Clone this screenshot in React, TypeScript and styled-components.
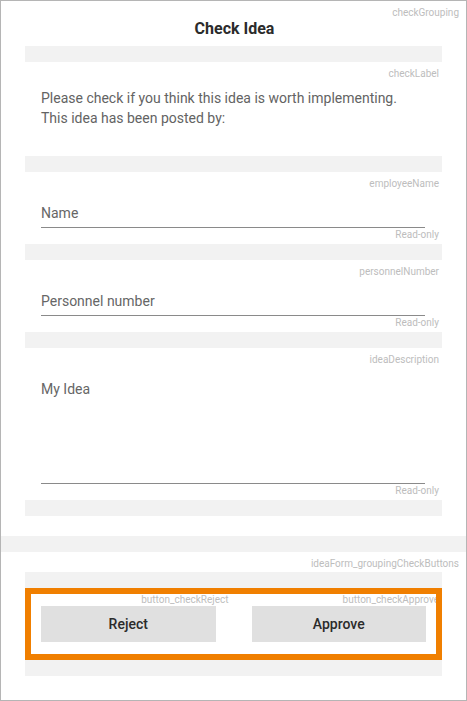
import styled, { createGlobalStyle } from 'styled-components';

const GlobalStyle = createGlobalStyle`
  html, body {
    margin: 0;
    padding: 0;
    background: #ffffff;
  }
  body {
    font-family: Roboto, "Liberation Sans", sans-serif;
  }
`;

const Frame = styled.div`
  box-sizing: border-box;
  width: 467px;
  height: 701px;
  border: 1px solid #b5b5b5;
  display: flex;
  flex-direction: column;
  background: #ffffff;
`;

const HintLabel = styled.div<{ $offset?: number }>`
  font-size: 10px;
  line-height: 12px;
  height: 12px;
  color: #bdbdbd;
  text-align: right;
  white-space: nowrap;
  margin-right: ${(p) => p.$offset ?? 0}px;
`;

const TitleArea = styled.div`
  height: 45px;
  padding-top: 6px;
  box-sizing: border-box;
`;

const Title = styled.h1`
  margin: 0;
  font-size: 16px;
  line-height: 20px;
  font-weight: 700;
  color: #2b2b2b;
  text-align: center;
  padding-left: 2px;
`;

const Group = styled.div`
  padding: 0 24px;
  display: flex;
  flex-direction: column;
`;

const Spacer = styled.div`
  height: 16px;
  background: #f2f2f2;
  flex-shrink: 0;
`;

const Section = styled.div<{ $height: number }>`
  height: ${(p) => p.$height}px;
  box-sizing: border-box;
  padding: 6px 3px 0 16px;
  display: flex;
  flex-direction: column;
`;

const Paragraph = styled.p`
  margin: 8px 0 0 0;
  font-size: 14px;
  line-height: 20px;
  color: #636363;
`;

const InputBox = styled.div<{ $height: number }>`
  box-sizing: border-box;
  height: ${(p) => p.$height}px;
  margin-right: 14px;
  padding-top: 13px;
  border-bottom: 1px solid #8a8a8a;
  font-size: 14px;
  line-height: 20px;
  color: #666666;
`;

const ReadOnly = styled(HintLabel)`
  margin-top: 1px;
`;

const Gap = styled.div`
  height: 20px;
  flex-shrink: 0;
`;

const ButtonsHeader = styled.div`
  height: 20px;
  box-sizing: border-box;
  padding-top: 6px;
`;

const ButtonsTray = styled.div`
  margin: 0 24px;
  padding: 16px 0;
  background: #f2f2f2;
`;

const HighlightBox = styled.div`
  border: 6px solid #f07f00;
  background: #ffffff;
  height: 72px;
  box-sizing: border-box;
  display: flex;
  overflow: hidden;
`;

const ButtonCell = styled.div`
  flex: 1;
  display: flex;
  flex-direction: column;
  min-width: 0;
`;

const ActionButton = styled.button`
  height: 36px;
  border: none;
  background: #e0e0e0;
  font-family: Roboto, "Liberation Sans", sans-serif;
  font-size: 14px;
  font-weight: 500;
  color: #2b2b2b;
  cursor: pointer;
  padding: 0;
`;

const ButtonWrap = styled.div<{ $left: number; $right: number }>`
  display: flex;
  flex-direction: column;
  padding: 0 ${(p) => p.$right}px 0 ${(p) => p.$left}px;
`;

interface FieldProps {
  name: string;
  value: string;
  height: number;
  boxHeight: number;
}

const ReadOnlyField = ({ name, value, height, boxHeight }: FieldProps) => (
  <Section $height={height}>
    <HintLabel>{name}</HintLabel>
    <InputBox $height={boxHeight}>{value}</InputBox>
    <ReadOnly>Read-only</ReadOnly>
  </Section>
);

export default function App() {
  return (
    <>
      <GlobalStyle />
      <Frame>
        <TitleArea>
          <HintLabel $offset={7}>checkGrouping</HintLabel>
          <Title>Check Idea</Title>
        </TitleArea>
        <Group>
          <Spacer />
          <Section $height={94}>
            <HintLabel>checkLabel</HintLabel>
            <Paragraph>
              Please check if you think this idea is worth implementing.
              <br />
              This idea has been posted by:
            </Paragraph>
          </Section>
          <Spacer />
          <ReadOnlyField name="employeeName" value="Name" height={72} boxHeight={38} />
          <Spacer />
          <ReadOnlyField name="personnelNumber" value="Personnel number" height={72} boxHeight={38} />
          <Spacer />
          <ReadOnlyField name="ideaDescription" value="My Idea" height={152} boxHeight={118} />
          <Spacer />
        </Group>
        <Gap />
        <Spacer />
        <ButtonsHeader>
          <HintLabel $offset={7}>ideaForm_groupingCheckButtons</HintLabel>
        </ButtonsHeader>
        <ButtonsTray>
          <HighlightBox>
            <ButtonCell>
              <HintLabel $offset={5}>button_checkReject</HintLabel>
              <ButtonWrap $left={10} $right={18}>
                <ActionButton>Reject</ActionButton>
              </ButtonWrap>
            </ButtonCell>
            <ButtonCell>
              <HintLabel $offset={-3}>button_checkApprove</HintLabel>
              <ButtonWrap $left={18} $right={10}>
                <ActionButton>Approve</ActionButton>
              </ButtonWrap>
            </ButtonCell>
          </HighlightBox>
        </ButtonsTray>
      </Frame>
    </>
  );
}
